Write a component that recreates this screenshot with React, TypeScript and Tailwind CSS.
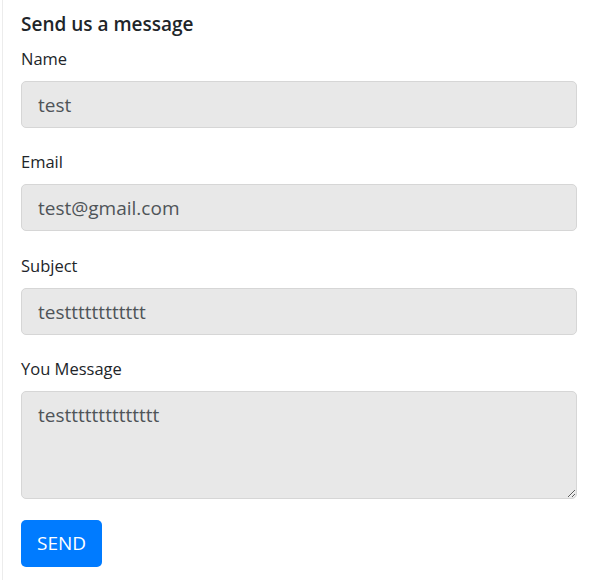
import React from "react";

const font = { fontFamily: '"Open Sans", "Noto Sans", sans-serif' };

function Field({ label, value, cls }: { label: string; value: string; cls: string }) {
  return (
    <div className={"flex flex-col " + cls}>
      <label className="text-[16.5px] leading-[24px] text-[#212529]">{label}</label>
      <input
        readOnly
        value={value}
        className="mt-[10px] h-[47px] w-[556px] rounded-[5px] border border-[#d6d6d6] bg-[#e8e8e8] px-4 text-[19px] text-[#4f5458] outline-none"
      />
    </div>
  );
}

const subject = "tes" + "t".repeat(12);
const message = "tes" + "t".repeat(14);

export default function App() {
  return (
    <div className="h-[580px] w-[613px] bg-white" style={font}>
      <div className="ml-[2px] h-full border-l border-[#ececec] pl-[18px] pt-[10px]">
        <h2 className="text-[19px] font-semibold leading-[28px] text-[#212529]">Send us a message</h2>
        <div className="mt-[9px]">
          <Field cls="" label="Name" value="test" />
          <Field cls="mt-[22px]" label="Email" value="test@gmail.com" />
          <Field cls="mt-[23px]" label="Subject" value={subject} />
          <div className="mt-[22px] flex flex-col">
            <label className="text-[16.5px] leading-[24px] text-[#212529]">You Message</label>
            <textarea
              readOnly
              value={message}
              className="mt-[10px] h-[108px] w-[556px] rounded-[5px] border border-[#d6d6d6] bg-[#e8e8e8] px-4 py-[8px] text-[19px] leading-[30px] text-[#4f5458] outline-none"
            />
          </div>
          <button className="mt-[21px] h-[47px] rounded-[5px] bg-[#007bff] px-4 text-[19px] text-white">
            SEND
          </button>
        </div>
      </div>
    </div>
  );
}
